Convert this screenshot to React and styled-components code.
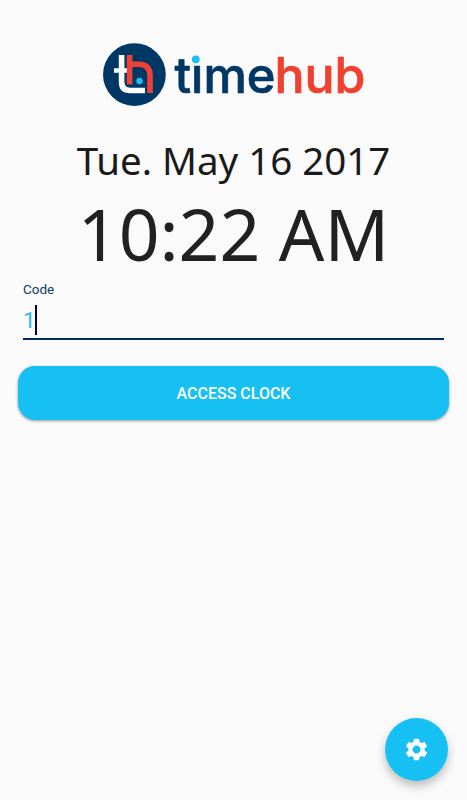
import React, { useState } from 'react';
import styled, { createGlobalStyle } from 'styled-components';
import { MdSettings } from 'react-icons/md';

const GlobalStyle = createGlobalStyle`
  * {
    box-sizing: border-box;
  }

  body {
    margin: 0;
    background: #fafafa;
    font-family: Roboto, sans-serif;
  }
`;

const Screen = styled.main`
  min-height: 100vh;
  padding: 43px 18px 0;
  display: flex;
  flex-direction: column;
  background: #fafafa;
`;

const Logo = styled.svg`
  display: block;
  width: 264px;
  height: 64px;
  margin-left: 84px;
`;

const Wordmark = styled.text`
  font-family: Inter, sans-serif;
  font-size: 49.5px;
  font-weight: 500;
  stroke-width: 0.7px;
  stroke-linejoin: round;
`;

const DateText = styled.div`
  margin-top: 25px;
  height: 56px;
  line-height: 56px;
  font-family: 'Noto Sans', sans-serif;
  font-size: 38.5px;
  text-align: center;
  white-space: nowrap;
  color: #1a1a1a;
`;

const TimeText = styled.div`
  height: 91px;
  line-height: 91px;
  font-family: 'Noto Sans', sans-serif;
  font-size: 71.4px;
  text-align: center;
  white-space: nowrap;
  color: #212121;
`;

const Field = styled.label`
  display: flex;
  flex-direction: column;
  margin: 2px 5px 0;
`;

const FieldLabel = styled.span`
  height: 16px;
  line-height: 16px;
  font-size: 13.5px;
  color: #123a68;
`;

const InputRow = styled.div`
  display: flex;
  align-items: center;
  height: 43px;
  padding-top: 5px;
  border-bottom: 2px solid #002d62;
`;

const CodeValue = styled.span`
  font-size: 22.5px;
  color: #29c0f0;
`;

const Caret = styled.span`
  width: 2px;
  height: 30px;
  margin-left: -1px;
  background: #000050;
`;

const AccessButton = styled.button`
  height: 54px;
  margin-top: 26px;
  border: none;
  border-radius: 17px;
  background: #17c0f3;
  box-shadow: 0 1px 3px rgba(0, 0, 0, 0.4);
  font-family: Roboto, sans-serif;
  font-size: 16px;
  font-weight: 500;
  color: #ffffff;
  cursor: pointer;
`;

const SettingsButton = styled.button`
  position: fixed;
  right: 19px;
  bottom: 19px;
  width: 63px;
  height: 63px;
  padding: 0;
  display: flex;
  align-items: center;
  justify-content: center;
  border: none;
  border-radius: 50%;
  background: #17c0f3;
  box-shadow: 0 5px 10px rgba(0, 0, 0, 0.25);
  color: #ffffff;
  cursor: pointer;
`;

const TimehubLogo = () => (
  <Logo viewBox="102 43 264 64" role="img" aria-label="timehub">
    <circle cx="134.4" cy="74.6" r="31.4" fill="#003865" />
    <g fill="none" strokeWidth="5.6">
      <path d="M121.6 55V82Q121.6 90.5 130.1 90.5H145" stroke="#fff" />
      <path d="M114 70.5H127" stroke="#fff" strokeWidth="4.5" />
      <path d="M129.6 55V84.5" stroke="#ef4135" />
      <path d="M129.6 64.3H138.5Q150 64.3 150 75.8V93" stroke="#ef4135" />
    </g>
    <circle cx="139.5" cy="81" r="3.2" fill="#1fbdf0" />
    <Wordmark x="174.5" y="93" fill="#003865" stroke="#003865" textLength="101" lengthAdjust="spacingAndGlyphs">time</Wordmark>
    <Wordmark x="274.5" y="93" fill="#ef4130" stroke="#ef4130" textLength="91" lengthAdjust="spacingAndGlyphs">hub</Wordmark>
    {/* round cyan dot replaces the font's own dot on the i */}
    <rect x="191" y="50" width="11" height="14" fill="#fafafa" />
    <circle cx="195.8" cy="59.3" r="3.9" fill="#1bbdf2" />
  </Logo>
);

const App = () => {
  const [code] = useState('1');

  return (
    <>
      <GlobalStyle />
      <Screen>
        <TimehubLogo />
        <DateText>Tue. May 16 2017</DateText>
        <TimeText>10:22 AM</TimeText>
        <Field>
          <FieldLabel>Code</FieldLabel>
          <InputRow>
            <CodeValue>{code}</CodeValue>
            <Caret />
          </InputRow>
        </Field>
        <AccessButton>ACCESS CLOCK</AccessButton>
        <SettingsButton aria-label="Settings">
          <MdSettings size={27} />
        </SettingsButton>
      </Screen>
    </>
  );
};

export default App;
